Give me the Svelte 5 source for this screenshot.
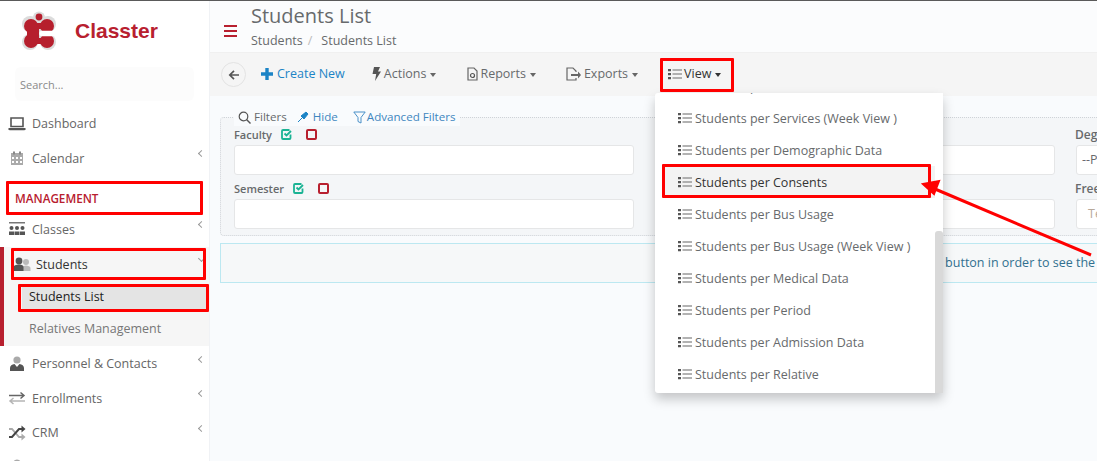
<script>
  const nav1 = [
    { label: 'Dashboard', icon: 'laptop' },
    { label: 'Calendar', icon: 'calendar', arrow: true }
  ]
  const nav2 = [
    { label: 'Personnel & Contacts', icon: 'person', arrow: true },
    { label: 'Enrollments', icon: 'swap', arrow: true },
    { label: 'CRM', icon: 'shuffle', arrow: true }
  ]
  const views = [
    'Students per Services',
    'Students per Services (Week View )',
    'Students per Demographic Data',
    'Students per Consents',
    'Students per Bus Usage',
    'Students per Bus Usage (Week View )',
    'Students per Medical Data',
    'Students per Period',
    'Students per Admission Data',
    'Students per Relative'
  ]
</script>

{#snippet navIcon(name)}
  <svg class="nav-icon" viewBox="0 0 18 16" width="18" height="16">
    {#if name === 'laptop'}
      <path d="M3 2h12v8.500H3z" fill="none" stroke="#555" stroke-width="1.600" />
      <path d="M0.500 12h17v1.200l-1 1H1.500l-1-1z" fill="#555" />
    {:else if name === 'calendar'}
      <path d="M3 3h12v12H3z" fill="#aaa" />
      <path d="M5 1.500h2v3H5zM11 1.500h2v3h-2z" fill="#888" />
      <path d="M4 7h2v2H4zM8 7h2v2H8zM12 7h2v2h-2zM4 11h2v2H4zM8 11h2v2H8zM12 11h2v2h-2z" fill="#fff" />
    {:else if name === 'person'}
      <circle cx="9" cy="4" r="3.600" fill="#aaa" />
      <path d="M2 15v-3c0-2.500 2-3.500 4.500-4l2.500 3 2.500-3c2.500.5 4.500 1.500 4.500 4v3z" fill="#555" />
    {:else if name === 'swap'}
      <path d="M1 5.500h15M12.500 2.500l3.500 3-3.500 3" fill="none" stroke="#666" stroke-width="1.500" />
      <path d="M17 11H2M5.500 8l-3.500 3 3.500 3" fill="none" stroke="#b5b5b5" stroke-width="1.500" />
    {:else if name === 'shuffle'}
      <path d="M1 4h3l7 8h3" fill="none" stroke="#aaa" stroke-width="1.800" />
      <path d="M1 12h3l7-8h3" fill="none" stroke="#444" stroke-width="2" />
      <path d="M13.500 0.500l4 3.500-4 3.500z" fill="#444" />
      <path d="M13.500 8.500l4 3.500-4 3.500z" fill="#aaa" />
    {/if}
  </svg>
{/snippet}

{#snippet listIcon()}
  <svg class="list-icon" viewBox="0 0 14 12" width="14" height="12">
    <path d="M0 1h3v2.200H0zM0 5h3v2.200H0zM0 9h3v2.200H0z" fill="#555" />
    <path d="M4.500 1.200H14v1.600H4.500zM4.500 5.200H14v1.600H4.500zM4.500 9.200H14v1.600H4.500z" fill="#999" />
  </svg>
{/snippet}

{#snippet checks()}
  <svg class="check" viewBox="0 0 12 12" width="12" height="12">
    <path d="M9.500 6.500V10a1 1 0 0 1-1 1H2a1 1 0 0 1-1-1V3a1 1 0 0 1 1-1h6.500" fill="none" stroke="#1ab394" stroke-width="1.800" />
    <path d="M3.500 5.500l2 2 4.500-4.500" fill="none" stroke="#1ab394" stroke-width="1.800" />
  </svg>
  <span class="uncheck"></span>
{/snippet}

<div class="page">
  <aside class="sidebar">
    <div class="brand">
      <svg class="logo" viewBox="0 0 34 40" width="34" height="40">
        <g fill="#dcdcdc">
          <circle cx="17" cy="6.500" r="6" />
          <circle cx="8" cy="13" r="8" /><circle cx="26" cy="13" r="8" />
          <circle cx="8" cy="31" r="8" /><circle cx="26" cy="31" r="8" />
          <path d="M6 12h22v20H6z" />
        </g>
        <g fill="#b61f2d">
          <circle cx="17" cy="6" r="3.400" />
          <circle cx="9" cy="15" r="7" /><circle cx="25" cy="15" r="7" />
          <circle cx="9" cy="30" r="7" /><circle cx="25" cy="30" r="7" />
          <path d="M6 12h22v6H6zM6 27h22v6H6zM5 15h12v15H5z" />
        </g>
        <path d="M33 22.500H20" stroke="#fff" stroke-width="5.500" stroke-linecap="round" />
      </svg>
      <span class="brand-name">Classter</span>
    </div>
    <div class="search">Search...</div>

    <nav>
      {#each nav1 as item}
        <div class="nav-item">
          {@render navIcon(item.icon)}
          <span>{item.label}</span>
          {#if item.arrow}<i class="chev"></i>{/if}
        </div>
      {/each}
      <div class="section">MANAGEMENT</div>
      <div class="nav-item classes">
        <svg class="nav-icon" viewBox="0 0 18 16" width="18" height="16">
          <path d="M1 1h16v1.500H1z" fill="#777" />
          <circle cx="3.500" cy="7" r="2" fill="#555" /><circle cx="9" cy="7" r="2" fill="#555" /><circle cx="14.500" cy="7" r="2" fill="#555" />
          <path d="M1 14v-3.500h5V14zM6.500 14v-3.500h5V14zM12 14v-3.500h5V14z" fill="#555" />
        </svg>
        <span>Classes</span>
        <i class="chev"></i>
      </div>
      <div class="open-group">
        <div class="nav-item students">
          <svg class="nav-icon" viewBox="0 0 18 16" width="18" height="16">
            <circle cx="13" cy="5" r="3" fill="#bbb" />
            <path d="M9 14v-3c0-1.500 2-2.500 4-2.500s4.500 1 4.500 2.500v3z" fill="#bbb" />
            <circle cx="6" cy="4" r="3.400" fill="#555" />
            <path d="M0.500 14v-4c0-1.500 2.500-2.500 5.500-2.500s4.500 1 4.500 2.500v4z" fill="#555" />
          </svg>
          <span>Students</span>
          <i class="chev down"></i>
        </div>
        <div class="sub active">Students List</div>
        <div class="sub">Relatives Management</div>
      </div>
      {#each nav2 as item}
        <div class="nav-item">
          {@render navIcon(item.icon)}
          <span>{item.label}</span>
          {#if item.arrow}<i class="chev"></i>{/if}
        </div>
      {/each}
      <div class="nav-item">
        {@render navIcon('person')}
      </div>
    </nav>
  </aside>

  <main class="content">
    <header class="top">
      <div class="burger"><span></span><span></span><span></span></div>
      <div>
        <h1>Students List</h1>
        <div class="crumbs"><span>Students</span><em>/</em><span>Students List</span></div>
      </div>
    </header>

    <div class="toolbar">
      <button class="back" aria-label="Back">
        <svg viewBox="0 0 12 12" width="12" height="12"><path d="M11 6H2M6 1.800L1.800 6 6 10.200" fill="none" stroke="#555" stroke-width="1.700" /></svg>
      </button>
      <div class="tool create">
        <svg viewBox="0 0 12 12" width="12" height="12"><path d="M4.300 0h3.400v4.300H12v3.400H7.700V12H4.300V7.700H0V4.300h4.300z" fill="#1c84c6" /></svg>
        Create New
      </div>
      <div class="tool actions">
        <svg viewBox="0 0 9 14" width="9" height="14"><path d="M2 0h6L6 4.500h3L3 14l1.200-7H0.500z" fill="#555" /></svg>
        Actions <i class="caret"></i>
      </div>
      <div class="tool reports">
        <svg viewBox="0 0 11 14" width="11" height="14"><path d="M1 1h6l3 3v9H1z" fill="none" stroke="#666" stroke-width="1.200" /><circle cx="5.500" cy="8.500" r="2" fill="none" stroke="#555" stroke-width="1.200" /></svg>
        Reports <i class="caret"></i>
      </div>
      <div class="tool exports">
        <svg viewBox="0 0 15 14" width="15" height="14"><path d="M10 5V4L7 1H1v12h9v-2" fill="none" stroke="#666" stroke-width="1.200" /><path d="M5 7h7V4.500L15 8l-3 3.500V9H5z" fill="#666" /></svg>
        Exports <i class="caret"></i>
      </div>
      <div class="tool view">
        {@render listIcon()}
        View <i class="caret dark"></i>
      </div>
    </div>

    <section class="body">
      <div class="filters">
        <div class="legend">
          <span class="legend-item">
            <svg viewBox="0 0 13 13" width="13" height="13"><circle cx="5.500" cy="5.500" r="4.300" fill="none" stroke="#555" stroke-width="1.200" /><path d="M8.500 8.500l4 4" stroke="#555" stroke-width="1.400" /></svg>
            Filters
          </span>
          <span class="legend-item link hide">
            <svg viewBox="0 0 12 12" width="12" height="12"><path d="M1 11l4-4M4 5l3 3 4-5-2-2z" fill="#1c84c6" stroke="#1c84c6" /></svg>
            Hide
          </span>
          <span class="legend-item link adv">
            <svg viewBox="0 0 13 13" width="13" height="13"><path d="M0.800 1h11.400L8 6.500V12L5 10.500v-4z" fill="none" stroke="#4a90c8" stroke-width="1" /></svg>
            Advanced Filters
          </span>
        </div>
        <div class="grid">
          <div class="field">
            <div class="label">Faculty {@render checks()}</div>
            <div class="input"></div>
          </div>
          <div class="field">
            <div class="label"></div>
            <div class="input"></div>
          </div>
          <div class="field">
            <div class="label big">Degree</div>
            <div class="input">--Please Select--</div>
          </div>
          <div class="field">
            <div class="label">Semester {@render checks()}</div>
            <div class="input"></div>
          </div>
          <div class="field">
            <div class="label"></div>
            <div class="input"></div>
          </div>
          <div class="field">
            <div class="label big">Free Text</div>
            <div class="input hint">Text</div>
          </div>
        </div>
      </div>
      <div class="notice">Please press the search button in order to see the results</div>
    </section>
  </main>

  <div class="menu">
    <div class="menu-list">
      {#each views as v, i}
        <div class="menu-row" class:hover={i === 3}>
          {@render listIcon()}
          <span>{v}</span>
        </div>
      {/each}
    </div>
    <div class="scroll-track"><div class="scroll-thumb"></div></div>
  </div>

  <!-- tutorial annotations drawn on top of the screenshot -->
  <div class="mark m-view"></div>
  <div class="mark m-consents"></div>
  <div class="mark m-section"></div>
  <div class="mark m-students"></div>
  <div class="mark m-list"></div>
  <svg class="arrow" viewBox="0 0 1097 461" width="1097" height="461">
    <path d="M1091 255L935 189" stroke="#f00" stroke-width="3" fill="none" />
    <path d="M923 184l16-3-5 13z" fill="#f00" stroke="#f00" stroke-width="2" />
  </svg>
</div>

<style>
  :global(body) {
    margin: 0;
    font-family: "Open Sans", sans-serif;
    overflow: hidden;
  }

  .page {
    position: relative;
    display: flex;
    width: 1097px;
    height: 461px;
    overflow: hidden;
    border-top: 1px solid #5a5a5a;
    box-sizing: border-box;
    background: #f9fbfd;
    color: #676a6c;
    font-size: 12.5px;
  }

  .sidebar {
    width: 209px;
    flex: none;
    background: #fff;
    border-right: 1px solid #f0f2f5;
  }

  .brand {
    display: flex;
    align-items: center;
    height: 59px;
    padding-left: 22px;
    gap: 19px;
  }

  .brand-name {
    font-family: "Liberation Sans", sans-serif;
    font-weight: 700;
    font-size: 21px;
    color: #b8202f;
  }

  .search {
    margin: 7px 15px 0;
    height: 34px;
    line-height: 36px;
    padding-left: 5px;
    background: #fcfcfc;
    border-radius: 6px;
    font-size: 11px;
    color: #8a8a8a;
  }

  nav {
    padding-top: 4.500px;
  }

  .nav-item {
    position: relative;
    display: flex;
    align-items: center;
    box-sizing: border-box;
    height: 34.5px;
    padding: 2px 0 0 8px;
    gap: 6px;
    color: #666;
  }

  .nav-icon {
    flex: none;
  }

  .chev {
    position: absolute;
    right: 5px;
    top: 11px;
    width: 4px;
    height: 4px;
    border-left: 1px solid #999;
    border-bottom: 1px solid #999;
    transform: rotate(45deg);
  }

  .chev.down {
    transform: rotate(-45deg);
    top: 9px;
  }

  .section {
    height: 36px;
    box-sizing: border-box;
    padding: 14px 0 0 15px;
    line-height: 18px;
    font-size: 11.7px;
    font-weight: 600;
    color: #b8202f;
  }

  .classes {
    height: 35px;
  }

  .open-group {
    margin-top: 1px;
    padding-bottom: 2px;
    background: #f6f6f6;
    border-left: 4px solid #b8202f;
  }

  .students {
    height: 34px;
    padding-left: 9px;
    gap: 5px;
    color: #333;
  }

  .sub {
    height: 32px;
    line-height: 34px;
    padding-left: 25px;
    color: #777;
  }

  .sub.active {
    background: #e4e4e4;
    height: 24px;
    line-height: 24px;
    margin: 4px 1px 3px 18px;
    padding-left: 7px;
    color: #222;
  }

  .content {
    flex: 1;
    min-width: 0;
  }

  .top {
    display: flex;
    align-items: flex-start;
    height: 51px;
    box-sizing: border-box;
    padding-left: 14px;
    gap: 14px;
    background: #fbfcfd;
  }

  .burger {
    display: grid;
    gap: 3px;
    width: 13px;
    margin-top: 24px;
  }

  .burger span {
    height: 2px;
    background: #b8202f;
  }

  h1 {
    margin: 3px 0 0;
    font-size: 20px;
    line-height: 24px;
    font-weight: 400;
    color: #676a6c;
  }

  .crumbs {
    display: flex;
    gap: 5px;
    margin-top: 4px;
    line-height: 18px;
  }

  .crumbs em {
    font-style: normal;
    color: #bbb;
    margin-right: 4px;
  }

  .toolbar {
    display: flex;
    align-items: center;
    height: 44px;
    padding: 0 0 2px 11px;
    background: #f5f5f5;
    border-top: 1px solid #f0f0f0;
    box-sizing: border-box;
  }

  .back {
    display: grid;
    place-items: center;
    width: 25px;
    height: 25px;
    margin-top: 2px;
    padding: 0;
    background: #f5f5f5;
    border: 1px solid #e3e3e3;
    border-radius: 50%;
  }

  .tool {
    display: flex;
    align-items: center;
    gap: 3px;
    white-space: nowrap;
  }

  .create {
    margin-left: 15px;
    color: #1c84c6;
    gap: 4px;
  }

  .actions {
    margin-left: 27px;
  }

  .reports {
    margin-left: 31px;
    gap: 2px;
  }

  .exports {
    margin-left: 30px;
  }

  .view {
    margin-left: 30px;
    gap: 2px;
    color: #333;
  }

  .caret {
    display: block;
    width: 0;
    height: 0;
    margin-left: 1px;
    margin-top: 2px;
    border-left: 3.5px solid transparent;
    border-right: 3.5px solid transparent;
    border-top: 4px solid #666;
  }

  .reports .caret,
  .view .caret {
    margin-left: 2px;
  }

  .caret.dark {
    border-top-color: #333;
  }

  .body {
    padding: 21px 0 0 10px;
    width: 1000px;
    position: relative;
  }

  .filters {
    position: relative;
    border: 1px dotted #cfd3d8;
    border-radius: 4px;
    background: #f4f6f8;
    height: 119px;
    box-sizing: border-box;
    padding: 8px 0 0 13px;
  }

  .legend {
    position: absolute;
    top: -10px;
    left: 13px;
    display: flex;
    background: #f9fbfd;
    padding: 0 4px;
    font-size: 11.6px;
    line-height: 18px;
  }

  .legend-item {
    display: flex;
    align-items: center;
    gap: 3px;
  }

  .legend-item.link {
    color: #3f87c0;
  }

  .hide {
    margin-left: 10px;
    gap: 4px;
  }

  .adv {
    margin-left: 15px;
    gap: 1px;
  }

  .grid {
    display: grid;
    grid-template-columns: 400px 400px 400px;
    column-gap: 21px;
  }

  .label {
    display: flex;
    align-items: center;
    height: 16px;
    font-size: 11px;
    font-weight: 600;
    color: #676a6c;
    white-space: nowrap;
    gap: 9px;
  }

  .label.big {
    font-size: 12px;
    margin-left: -1px;
  }

  .check {
    flex: none;
  }

  .uncheck {
    display: block;
    width: 7px;
    height: 7px;
    margin-left: 4px;
    border: 2px solid #b8202f;
    border-radius: 2px;
  }

  .input {
    box-sizing: border-box;
    height: 29.5px;
    margin: 3px 0 5.5px;
    padding-left: 5px;
    line-height: 28px;
    background: #fff;
    border: 1px solid #e5e6e7;
    border-radius: 3px;
    font-size: 12.5px;
  }

  .input.hint {
    color: #b8a99a;
    padding-left: 11px;
  }

  .notice {
    margin-top: 7px;
    height: 40px;
    box-sizing: border-box;
    line-height: 38px;
    background: #f6f8f9;
    border: 1px solid #bce8f1;
    border-right: 0;
    padding-left: 584px;
    color: #31708f;
    white-space: nowrap;
  }

  .menu {
    position: absolute;
    left: 655px;
    top: 92px;
    width: 288px;
    height: 300px;
    display: flex;
    background: #fff;
    border-radius: 3px;
    box-shadow: 0 6px 12px rgba(0, 0, 0, 0.22);
  }

  .menu-list {
    flex: 1;
    overflow: hidden;
    min-width: 0;
  }

  .menu-row {
    display: flex;
    align-items: center;
    height: 32px;
    margin-left: 8px;
    padding-left: 15px;
    gap: 3px;
    white-space: nowrap;
    color: #676a6c;
  }

  .menu-row:first-child {
    margin-top: -23px;
  }

  .menu-row.hover {
    background: #f3f3f3;
    color: #333;
  }

  .scroll-track {
    width: 8px;
    flex: none;
    background: #fff;
    position: relative;
  }

  .scroll-thumb {
    position: absolute;
    left: 0;
    right: 0;
    top: 138px;
    bottom: 0;
    background: #d9d9d9;
    border-radius: 3px 3px 0 0;
  }

  .mark {
    position: absolute;
    box-sizing: border-box;
    border: 3px solid #f00;
    border-radius: 1px;
  }

  .m-view {
    left: 660px;
    top: 57px;
    width: 74px;
    height: 34px;
  }

  .m-consents {
    left: 662px;
    top: 163px;
    width: 269px;
    height: 34px;
  }

  .m-section {
    left: 6px;
    top: 180px;
    width: 197px;
    height: 34px;
  }

  .m-students {
    left: 11px;
    top: 247px;
    width: 195px;
    height: 32px;
  }

  .m-list {
    left: 18px;
    top: 283px;
    width: 191px;
    height: 28px;
  }

  .arrow {
    position: absolute;
    left: 0;
    top: -1px;
    pointer-events: none;
  }
</style>
